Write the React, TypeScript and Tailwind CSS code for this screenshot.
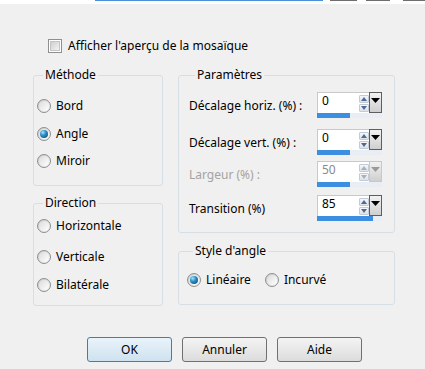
import React from 'react';

const Radio = ({ checked }: { checked?: boolean }) => (
  <span className="flex h-[14px] w-[14px] shrink-0 items-center justify-center rounded-full border border-[#8e8f8f] bg-gradient-to-br from-[#c8c8c8] to-[#f8f8f8]">
    <span className="flex h-[10px] w-[10px] items-center justify-center rounded-full bg-gradient-to-br from-[#dcdcdc] to-[#ffffff]">
      {checked && (
        <span className="h-[8px] w-[8px] rounded-full bg-[radial-gradient(circle_at_35%_30%,#a6e3fb_0%,#2b8fc7_40%,#0b3f63_100%)]" />
      )}
    </span>
  </span>
);

const RadioRow = ({ label, checked, className = '' }: { label: string; checked?: boolean; className?: string }) => (
  <div className={`flex h-[16px] items-center gap-[5px] ${className}`}>
    <Radio checked={checked} />
    <span>{label}</span>
  </div>
);

const GroupBox = ({
  title,
  className = '',
  children,
}: {
  title: string;
  className?: string;
  children: React.ReactNode;
}) => (
  <div className={`rounded-[3px] border border-[#d5dfe5] ${className}`}>
    <div className="-mt-[9px] ml-[6px] w-fit bg-[#f0f0f0] px-[2px] leading-[16px]">{title}</div>
    {children}
  </div>
);

const Spinner = ({ value, fill, disabled }: { value: string; fill: number; disabled?: boolean }) => (
  <div className="flex h-[26px] w-[65px] flex-col">
    <div className="flex h-[21px]">
      <div
        className={`flex flex-1 border-t border-l border-[#c9c9c9] bg-white pl-[4px] pt-[1px] leading-[14px] ${
          disabled ? 'text-[#8a8a8a]' : 'text-black'
        }`}
      >
        <span className="flex-1">{value}</span>
        <div className="flex w-[10px] flex-col gap-[1px] pt-[1px]">
          <div className="flex h-[8px] items-center justify-center rounded-[1px] border border-[#c3cbd6] bg-gradient-to-b from-[#f4f6f9] to-[#dde3ea]">
            <svg width="6" height="4" viewBox="0 0 6 4">
              <path d="M0 4 L3 0 L6 4 Z" fill={disabled ? '#a8b0bb' : '#4f6a8f'} />
            </svg>
          </div>
          <div className="flex h-[8px] items-center justify-center rounded-[1px] border border-[#c3cbd6] bg-gradient-to-b from-[#f4f6f9] to-[#dde3ea]">
            <svg width="6" height="4" viewBox="0 0 6 4">
              <path d="M0 0 L6 0 L3 4 Z" fill={disabled ? '#a8b0bb' : '#4f6a8f'} />
            </svg>
          </div>
        </div>
      </div>
      <div
        className={`flex w-[13px] justify-center border pt-[5px] bg-gradient-to-b from-[#f2f2f2] to-[#cfcfcf] ${
          disabled ? 'border-[#c8c8c8]' : 'border-[#5e5e5e]'
        }`}
      >
        <svg width="9" height="5" viewBox="0 0 9 5">
          <path d="M0 0 L9 0 L4.5 5 Z" fill={disabled ? '#9a9a9a' : '#000'} />
        </svg>
      </div>
    </div>
    <div className="flex h-[5px] bg-[#e8eef4]">
      <div className="h-full bg-[#3b8ee0]" style={{ width: fill }} />
    </div>
  </div>
);

const ParamRow = ({
  label,
  value,
  fill,
  disabled,
  className = '',
}: {
  label: string;
  value: string;
  fill: number;
  disabled?: boolean;
  className?: string;
}) => (
  <div className={`flex h-[26px] items-center ${className}`}>
    <span className={`w-[128px] pt-[1px] ${disabled ? 'text-[#a3a3a3]' : ''}`}>{label}</span>
    <Spinner value={value} fill={fill} disabled={disabled} />
  </div>
);

const Button = ({ label, primary }: { label: string; primary?: boolean }) => (
  <button
    className={`h-[25px] w-[85px] rounded-[3px] border text-center leading-[23px] ${
      primary
        ? 'border-[#3c7fb1] bg-gradient-to-b from-[#e9f3fa] to-[#cfe2f0]'
        : 'border-[#707070] bg-gradient-to-b from-[#f4f4f4] to-[#dcdcdc]'
    }`}
  >
    {label}
  </button>
);

export default function App() {
  return (
    <div className="h-[369px] w-[425px] overflow-hidden bg-[#f0f0f0] font-['Noto_Sans',sans-serif] text-[12px] text-black">
      {/* bord de la fenêtre précédente */}
      <div className="flex h-[4px] items-start bg-white">
        <div className="ml-[95px] h-[1px] w-[228px] bg-[#4a90d9]" />
        <div className="ml-[7px] h-[1px] w-[27px] bg-[#6e6e6e]" />
        <div className="ml-[9px] h-[1px] w-[24px] bg-[#6e6e6e]" />
        <div className="ml-[13px] h-[1px] w-[22px] bg-[#6e6e6e]" />
      </div>

      <div className="mt-[34px] flex h-[16px] items-center gap-[6px] pl-[48px]">
        <span className="flex h-[14px] w-[14px] items-center justify-center border border-[#8e8f8f] bg-white">
          <span className="h-[10px] w-[10px] border border-[#c4c4c4] bg-gradient-to-br from-[#cfcfcf] to-[#f4f4f4]" />
        </span>
        <span>Afficher l'aperçu de la mosaïque</span>
      </div>

      <div className="mt-[21px] flex gap-[15px] pl-[33px]">
        <div className="flex w-[130px] flex-col">
          <GroupBox title="Méthode" className="h-[111px] pl-[3px]">
            <RadioRow label="Bord" className="mt-[15px]" />
            <RadioRow label="Angle" checked className="mt-[12px]" />
            <RadioRow label="Miroir" className="mt-[11px]" />
          </GroupBox>
          <GroupBox title="Direction" className="mt-[17px] h-[103px] pl-[3px]">
            <RadioRow label="Horizontale" className="mt-[7px]" />
            <RadioRow label="Verticale" className="mt-[15px]" />
            <RadioRow label="Bilatérale" className="mt-[12px]" />
          </GroupBox>
        </div>

        <div className="flex w-[217px] flex-col">
          <GroupBox title="Paramètres" className="h-[158px] pl-[10px]">
            <ParamRow label="Décalage horiz. (%) :" value="0" fill={33} className="mt-[9px]" />
            <ParamRow label="Décalage vert. (%) :" value="0" fill={33} className="mt-[11px]" />
            <ParamRow label="Largeur (%) :" value="50" fill={33} disabled className="mt-[6px]" />
            <ParamRow label="Transition (%)" value="85" fill={56} className="mt-[8px]" />
          </GroupBox>
          <GroupBox title="Style d'angle" className="mt-[18px] h-[54px] pl-[8px]">
            <div className="mt-[13px] flex items-center gap-[14px]">
              <RadioRow label="Linéaire" checked />
              <RadioRow label="Incurvé" />
            </div>
          </GroupBox>
        </div>
      </div>

      <div className="mt-[31px] flex gap-[10px] pl-[87px]">
        <Button label="OK" primary />
        <Button label="Annuler" />
        <Button label="Aide" />
      </div>
    </div>
  );
}
